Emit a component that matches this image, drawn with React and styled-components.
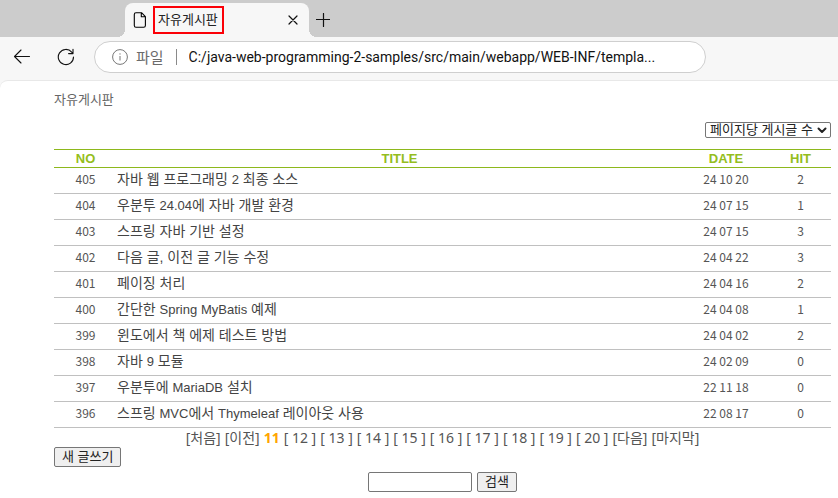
import React from "react";
import styled, { createGlobalStyle } from "styled-components";

const GlobalStyle = createGlobalStyle`
  * { box-sizing: border-box; }
  body { margin: 0; background: #f7f7f7; }
  button, input, select { font-family: inherit; margin: 0; }
`;

const Browser = styled.div`
  display: flex;
  flex-direction: column;
  min-height: 100vh;
  font-family: "Noto Sans CJK KR", sans-serif;
  background: #f7f7f7;
`;

const TabStrip = styled.header`
  display: flex;
  align-items: flex-end;
  height: 37px;
  padding-left: 125px;
  background: #cccccc;
`;

const Tab = styled.div`
  position: relative;
  display: flex;
  align-items: center;
  width: 184px;
  height: 34px;
  padding: 0 8px;
  background: #f7f7f7;
  border-radius: 8px 8px 0 0;

  &::before,
  &::after {
    content: "";
    position: absolute;
    bottom: 0;
    width: 8px;
    height: 8px;
  }
  &::before {
    right: 100%;
    background: radial-gradient(circle at 0 0, transparent 8px, #f7f7f7 8px);
  }
  &::after {
    left: 100%;
    background: radial-gradient(circle at 100% 0, transparent 8px, #f7f7f7 8px);
  }
`;

const TabTitle = styled.span`
  height: 28px;
  margin-left: 6px;
  padding: 0 4px 0 3px;
  border: 2px solid #fb0007;
  color: #222;
  font-size: 13px;
  line-height: 22px;
  white-space: nowrap;
`;

const IconButton = styled.button`
  display: flex;
  align-items: center;
  justify-content: center;
  width: ${(p) => p.$size}px;
  height: ${(p) => p.$size}px;
  padding: 0;
  border: 0;
  background: none;
  color: #111;
`;

const TabClose = styled(IconButton)`
  margin-left: auto;
`;

const NewTab = styled(IconButton)`
  margin: 0 0 9px 6px;
`;

const Toolbar = styled.nav`
  display: flex;
  align-items: center;
  gap: 20px;
  height: 43px;
  padding: 0 132px 3px 10px;
`;

const AddressBar = styled.label`
  display: flex;
  flex: 1;
  align-items: center;
  min-width: 0;
  height: 32px;
  margin-left: -4px;
  padding: 0 32px 0 17px;
  border: 1px solid #cfcfcf;
  border-radius: 16px;
  background: #fff;
`;

const Scheme = styled.span`
  margin-left: 8px;
  padding-right: 12px;
  border-right: 1px solid #8a8a8a;
  color: #6b6b6b;
  font-size: 15px;
  line-height: 16px;
`;

const AddressInput = styled.input`
  && {
    flex: 1;
    min-width: 0;
    padding: 0 0 0 12px;
    border: 0;
    outline: 0;
    background: none;
    color: #111;
    font-family: Roboto, sans-serif;
    font-size: 14px;
  }
`;

const Page = styled.main`
  flex: 1;
  padding: 8px 7px 0 54px;
  border-top: 1px solid #e8e8e8;
  border-radius: 8px 0 0 0;
  background: #fff;
  color: #555;
  font-size: 13px;
`;

const BoardName = styled.h1`
  margin: 0;
  color: #666;
  font-size: 13px;
  font-weight: 400;
  line-height: 20px;
`;

const Filters = styled.div`
  display: flex;
  justify-content: flex-end;
  margin: 13px 0 11px;
`;

const SelectBox = styled.span`
  position: relative;
  display: flex;

  svg {
    position: absolute;
    top: 5px;
    right: 4px;
    color: #222;
    pointer-events: none;
  }
`;

const PageSize = styled.select`
  appearance: none;
  width: 126px;
  height: 16px;
  padding: 0 0 0 4px;
  border: 1px solid #767676;
  border-radius: 2px;
  background: #fff;
  color: #222;
  font-family: "Liberation Sans", "Noto Sans CJK KR", sans-serif;
  font-size: 13px;
  line-height: 14px;
`;

const Board = styled.table`
  width: 100%;
  border-collapse: collapse;
  table-layout: fixed;
`;

const Column = styled.col`
  width: ${(p) => p.$width};
`;

const Heading = styled.th`
  height: 18px;
  padding: 0;
  border-top: 1px solid #8db81c;
  border-bottom: 1px solid #8db81c;
  color: #94bd20;
  font-family: "Liberation Sans", sans-serif;
  font-size: 13px;
  line-height: 17px;
`;

const Cell = styled.td`
  height: 26px;
  padding: 0 0 3px;
  border-bottom: 1px solid #c0c0c0;
  font-size: 12px;
  line-height: 20px;
  text-align: center;
  white-space: nowrap;
`;

const TitleCell = styled(Cell)`
  font-family: "Liberation Sans", "Noto Sans CJK KR", sans-serif;
  font-size: 14px;
  text-align: left;
`;

const PostLink = styled.a`
  color: #444;
  text-decoration: none;
`;

const Latin = styled.span`
  font-size: 13px;
`;

const Pagination = styled.nav`
  display: flex;
  justify-content: center;
  gap: 4px;
  color: #555;
  font-family: "Noto Sans", "Noto Sans CJK KR", sans-serif;
  font-size: 14px;
  line-height: 19px;
  white-space: nowrap;
`;

const PageLink = styled.a`
  color: inherit;
  text-decoration: none;
`;

const CurrentPage = styled.strong`
  color: #ffa500;
`;

const FormButton = styled.button`
  height: 20px;
  padding: 0 7px;
  border: 1px solid #767676;
  border-radius: 2px;
  background: #efefef;
  color: #222;
  font-family: "Liberation Sans", "Noto Sans CJK KR", sans-serif;
  font-size: 13px;
  line-height: 16px;
`;

const Actions = styled.div`
  display: flex;
`;

const SearchForm = styled.form`
  display: flex;
  justify-content: center;
  gap: 5px;
  padding-top: 5px;
`;

const SearchInput = styled.input`
  width: 104px;
  height: 20px;
  padding: 1px 2px;
  border: 1px solid #767676;
  border-radius: 2px;
`;

const posts = [
  [405, "자바 웹 프로그래밍 2 최종 소스", "24 10 20", 2],
  [404, "우분투 24.04에 자바 개발 환경", "24 07 15", 1],
  [403, "스프링 자바 기반 설정", "24 07 15", 3],
  [402, "다음 글, 이전 글 기능 수정", "24 04 22", 3],
  [401, "페이징 처리", "24 04 16", 2],
  [400, "간단한 Spring MyBatis 예제", "24 04 08", 1],
  [399, "윈도에서 책 에제 테스트 방법", "24 04 02", 2],
  [398, "자바 9 모듈", "24 02 09", 0],
  [397, "우분투에 MariaDB 설치", "22 11 18", 0],
  [396, "스프링 MVC에서 Thymeleaf 레이아웃 사용", "22 08 17", 0],
];

const pages = [12, 13, 14, 15, 16, 17, 18, 19, 20];

function Icon({ width, height, children, strokeWidth = 1.2 }) {
  return (
    <svg width={width} height={height} viewBox={`0 0 ${width} ${height}`} fill="none"
      stroke="currentColor" strokeWidth={strokeWidth} strokeLinecap="round" strokeLinejoin="round" aria-hidden="true">
      {children}
    </svg>
  );
}

function PostTitle({ text }) {
  return text
    .split(/([A-Za-z0-9.]+)/)
    .map((part, i) => (i % 2 ? <Latin key={i}>{part}</Latin> : part));
}

export default function App() {
  return (
    <>
      <GlobalStyle />
      <Browser>
        <TabStrip>
          <Tab>
            <Icon width={14} height={16} strokeWidth={1.1}>
              <path d="M3 .7H8.5L12.4 4.6V13.5Q12.4 15.3 10.6 15.3H3Q1.3 15.3 1.3 13.5V2.4Q1.3.7 3 .7Z M8.3 1V4.8H12.2" />
            </Icon>
            <TabTitle>자유게시판</TabTitle>
            <TabClose $size={16} aria-label="탭 닫기">
              <Icon width={10} height={10}><path d="M1 1 9 9M9 1 1 9" /></Icon>
            </TabClose>
          </Tab>
          <NewTab $size={16} aria-label="새 탭">
            <Icon width={14} height={14}><path d="M7.5 .5V13.5M.5 6.5H13.5" /></Icon>
          </NewTab>
        </TabStrip>
        <Toolbar>
          <IconButton $size={24} aria-label="뒤로">
            <Icon width={18} height={16} strokeWidth={1.1}><path d="M16.5 7.5H1.5M8 1 1.5 7.5 8 14" /></Icon>
          </IconButton>
          <IconButton $size={24} aria-label="새로 고침">
            <Icon width={18} height={18} strokeWidth={1.1}>
              <path d="M16.5 9A7.6 7.6 0 1 1 14.7 4.1L16 5.5M16 1.2V5.6H11.6" />
            </Icon>
          </IconButton>
          <AddressBar>
            <svg width="16" height="16" viewBox="0 0 16 16" fill="none" stroke="#777" aria-hidden="true">
              <circle cx="8" cy="8" r="7.4" />
              <path d="M8 7V11.5M8 4.3V5.6" />
            </svg>
            <Scheme>파일</Scheme>
            <AddressInput aria-label="주소" defaultValue="C:/java-web-programming-2-samples/src/main/webapp/WEB-INF/templa..." />
          </AddressBar>
        </Toolbar>
        <Page>
          <BoardName>자유게시판</BoardName>
          <Filters>
            <SelectBox>
              <PageSize aria-label="페이지당 게시글 수">
                <option>페이지당 게시글 수</option>
              </PageSize>
              <Icon width={10} height={7} strokeWidth={2}><path d="M1.5 1.5 5 5 8.5 1.5" /></Icon>
            </SelectBox>
          </Filters>
          <Board>
            <colgroup>
              <Column $width="63px" />
              <Column $width="auto" />
              <Column $width="88px" />
              <Column $width="61px" />
            </colgroup>
            <thead>
              <tr>
                <Heading scope="col">NO</Heading>
                <Heading scope="col">TITLE</Heading>
                <Heading scope="col">DATE</Heading>
                <Heading scope="col">HIT</Heading>
              </tr>
            </thead>
            <tbody>
              {posts.map(([no, title, date, hit]) => (
                <tr key={no}>
                  <Cell>{no}</Cell>
                  <TitleCell><PostLink href="#"><PostTitle text={title} /></PostLink></TitleCell>
                  <Cell>{date}</Cell>
                  <Cell>{hit}</Cell>
                </tr>
              ))}
            </tbody>
          </Board>
          <Pagination aria-label="페이지">
            <PageLink href="#">[처음]</PageLink>
            <PageLink href="#">[이전]</PageLink>
            <CurrentPage>11</CurrentPage>
            {pages.map((n) => (
              <PageLink href="#" key={n}>[ {n} ]</PageLink>
            ))}
            <PageLink href="#">[다음]</PageLink>
            <PageLink href="#">[마지막]</PageLink>
          </Pagination>
          <Actions>
            <FormButton type="button">새 글쓰기</FormButton>
          </Actions>
          <SearchForm onSubmit={(e) => e.preventDefault()}>
            <SearchInput type="text" aria-label="검색어" />
            <FormButton type="submit">검색</FormButton>
          </SearchForm>
        </Page>
      </Browser>
    </>
  );
}
